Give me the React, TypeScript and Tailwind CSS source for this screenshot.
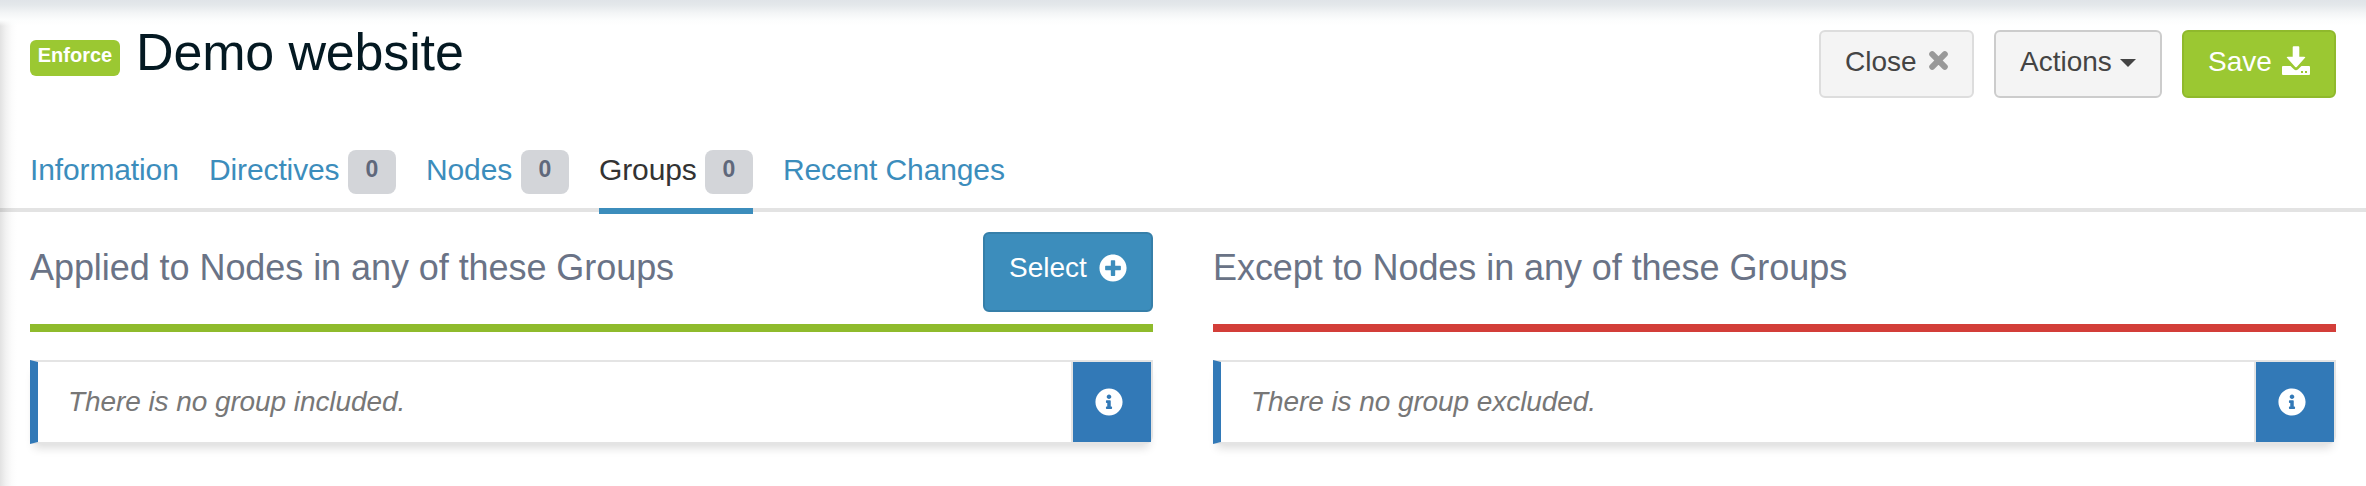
import React from "react";
import { FaPlusCircle, FaInfoCircle } from "react-icons/fa";

function Count() {
  return (
    <span className="flex h-11 w-12 shrink-0 justify-center rounded-lg bg-[#d3d5d9] pt-[7px] text-[23px] leading-[24px] font-bold text-[#60687b]">
      0
    </span>
  );
}

function Tab({ label, width, count, active }: { label: string; width: string; count?: boolean; active?: boolean }) {
  return (
    <a className={`flex h-16 shrink-0 items-start ${width} ${active ? "border-b-6 border-[#3c8dbc] text-[#333333]" : "text-[#3c8dbc]"}`}>
      <span className="min-w-0 flex-1 text-[30px] leading-[40px] tracking-[-0.12px] whitespace-nowrap">{label}</span>
      {count && <Count />}
    </a>
  );
}

function Panel({ title, bar, text, select }: { title: string; bar: string; text: string; select?: boolean }) {
  return (
    <section className="w-[1123px]">
      <div className={`flex h-[120px] justify-between border-b-8 pt-5 ${bar}`}>
        <h2 className="pt-4 text-[36px] leading-[40px] tracking-[-0.06px] text-[#6a7386]">{title}</h2>
        {select && (
          <button className="flex h-20 w-[170px] items-start rounded-md border-2 border-[#367fa9] bg-[#3c8dbc] pt-[14px] pl-6 text-[28px] leading-[40px] text-white">
            <span className="w-[90px] text-left">Select</span>
            <FaPlusCircle className="mt-[6px] size-7" />
          </button>
        )}
      </div>
      <div className="mt-7 flex h-[84px] rounded-br-lg border-2 border-l-8 border-[#e4e4e4] border-l-[#3279b7] bg-white shadow-[0_8px_10px_-4px_rgba(0,0,0,0.14)]">
        <p className="flex-1 pt-5 pl-[30px] text-[28px] leading-[40px] tracking-[-0.08px] text-[#777777] italic">{text}</p>
        <span className="flex w-20 items-start border-l-2 border-[#e4e4e4] bg-[#3279b7] pt-[26px] pl-[22px] text-white">
          <FaInfoCircle className="size-7" />
        </span>
      </div>
    </section>
  );
}

export default function App() {
  return (
    <main className="h-[486px] w-[2366px] overflow-hidden bg-white bg-[linear-gradient(to_bottom,#e0e4e8_0px,#e4e8eb_5px,#f3f5f6_13px,#fcfdfd_20px,transparent_26px),linear-gradient(to_right,#e2e2e2_0px,#f2f2f2_6px,#fcfcfc_12px,transparent_17px)] font-['Liberation_Sans',sans-serif]">
      <header className="flex h-[130px] items-start justify-between px-[30px] pt-[30px]">
        <div className="flex items-start">
          <span className="mt-[10px] flex h-9 w-[90px] justify-center rounded-md bg-[#9bc832] pt-[4px] text-[20px] leading-[22px] font-bold text-white">Enforce</span>
          <h1 className="-mt-[8px] ml-4 text-[52px] leading-[60px] tracking-[-0.15px] text-[#041922]">Demo website</h1>
        </div>
        <div className="flex gap-5 text-[28px] leading-[40px] text-[#444444]">
          <button className="flex h-[68px] w-[155px] items-start rounded-md border-2 border-[#dddddd] bg-[#f4f4f4] pt-[10px] pl-6">
            <span className="w-[84px] text-left">Close</span>
            <svg className="mt-[9px] size-[19px]" viewBox="0 0 19 19" fill="none" stroke="#999999" strokeWidth="6" strokeLinecap="round">
              <path d="M3.200 3.200l12.600 12.600M15.800 3.200L3.200 15.800" />
            </svg>
          </button>
          <button className="flex h-[68px] w-[168px] items-start rounded-md border-2 border-[#cccccc] bg-[#f4f4f4] pt-[10px] pl-6">
            <span className="w-[100px] text-left">Actions</span>
            <svg className="mt-[17px] h-2 w-4" viewBox="0 0 16 8" fill="currentColor"><path d="M0 0h16L8 8z" /></svg>
          </button>
          <button className="flex h-[68px] w-[154px] items-start rounded-md border-2 border-[#8fb92c] bg-[#9bc832] pt-[10px] pl-6 text-white">
            <span className="w-[74px] text-left">Save</span>
            <svg className="mt-[4px] h-[29px] w-7" viewBox="0 0 28 29" fill="currentColor">
              <path d="M10.700 1.300q0-1 1-1h4.600q1 0 1 1v9.400h4.700q2 0 .8 1.400l-7.800 8.700q-1 1-2 0l-7.800-8.700q-1.200-1.400.8-1.400h4.700z" />
              <path fillRule="evenodd" d="M1 20h7.500l3.400 3.300q2.100 1.700 4.200 0l3.400-3.300H27q1 0 1 1v7q0 1-1 1H1q-1 0-1-1v-7q0-1 1-1zM19 25v2h2v-2zm4 0v2h2v-2z" />
            </svg>
          </button>
        </div>
      </header>
      <nav className="flex h-[82px] gap-[30px] border-b-4 border-black/11 px-[30px] pt-5">
        <Tab label="Information" width="w-[149px]" />
        <Tab label="Directives" width="w-[187px]" count />
        <Tab label="Nodes" width="w-[143px]" count />
        <Tab label="Groups" width="w-[154px]" count active />
        <Tab label="Recent Changes" width="w-[224px]" />
      </nav>
      <div className="flex gap-[60px] px-[30px]">
        <Panel title="Applied to Nodes in any of these Groups" bar="border-[#8fbb2c]" text="There is no group included." select />
        <Panel title="Except to Nodes in any of these Groups" bar="border-[#d33e39]" text="There is no group excluded." />
      </div>
    </main>
  );
}
